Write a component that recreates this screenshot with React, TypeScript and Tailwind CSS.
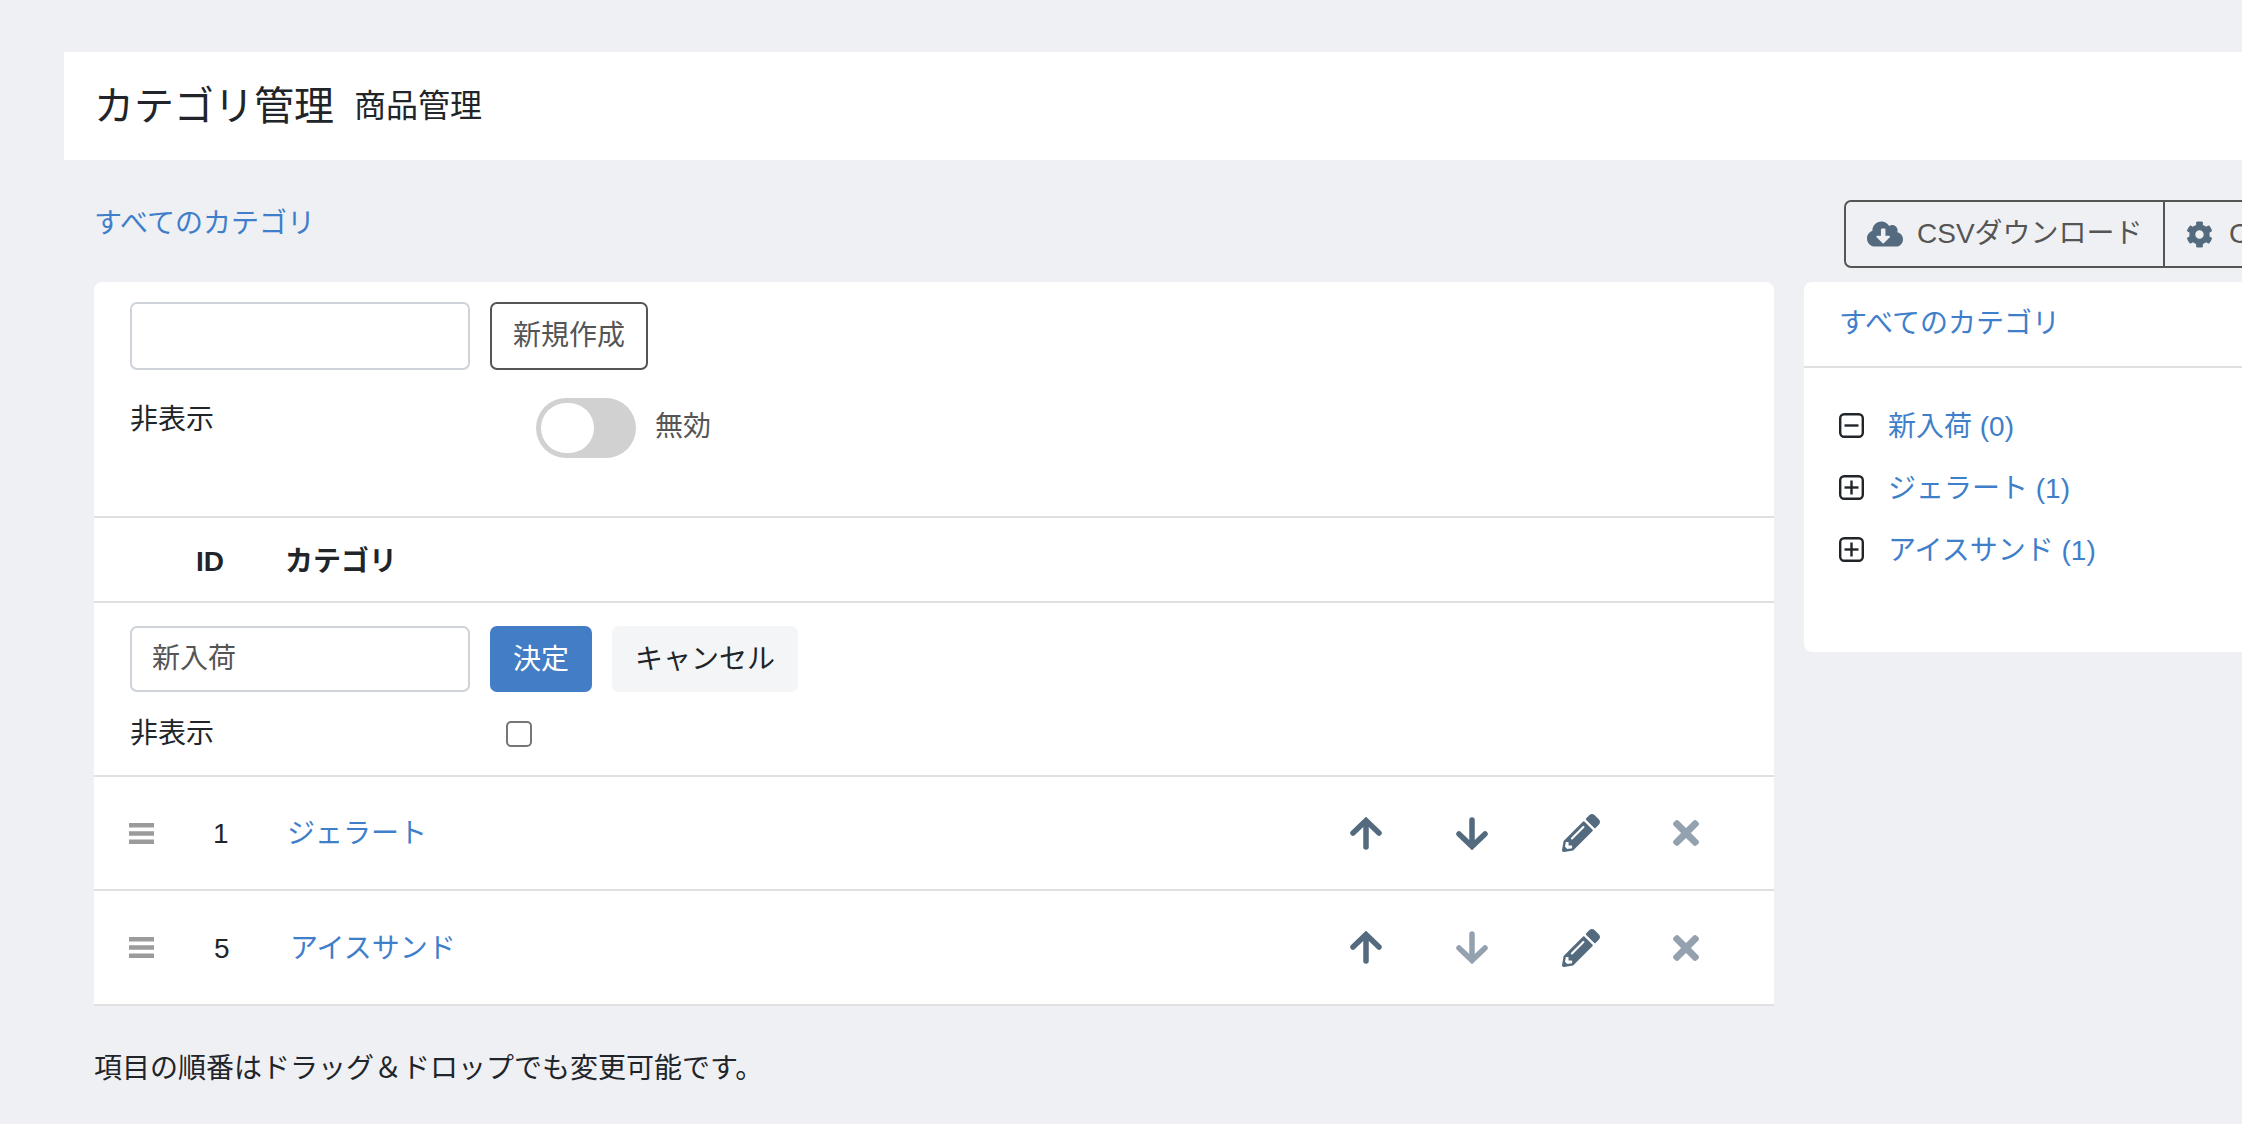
import { FaCloudDownloadAlt, FaCog, FaPencilAlt, FaTimes } from "react-icons/fa";

const FONT = "font-['Helvetica_Neue','Liberation_Sans','Noto_Sans_CJK_JP',sans-serif]";

const sideItems = [
  { label: "新入荷 (0)", open: true },
  { label: "ジェラート (1)", open: false },
  { label: "アイスサンド (1)", open: false },
];

const rows = [
  { id: "1", name: "ジェラート", idClass: "ml-[59px] w-[74px]", downMuted: false },
  { id: "5", name: "アイスサンド", idClass: "ml-[60px] w-[76px]", downMuted: true },
];

function Arrow({ up, muted }: { up?: boolean; muted?: boolean }) {
  return (
    <svg
      viewBox="0 0 32 33"
      className={`h-[33px] w-[32px] ${muted ? "text-[#94a1ae]" : "text-[#546a7e]"}`}
      fill="none"
      stroke="currentColor"
      strokeWidth="5.5"
      strokeLinecap="round"
      strokeLinejoin="miter"
    >
      {up ? (
        <path d="M16 30V5M3 16L16 3.5L29 16" />
      ) : (
        <path d="M16 3V28M3 17L16 29.5L29 17" />
      )}
    </svg>
  );
}

function DragHandle() {
  return (
    <svg viewBox="0 0 25 21" className="h-[21px] w-[25px] shrink-0" fill="#9b9b9b">
      <rect x="0" y="0" width="25" height="4.5" />
      <rect x="0" y="8.25" width="25" height="4.5" />
      <rect x="0" y="16.5" width="25" height="4.5" />
    </svg>
  );
}

function TreeToggle({ open }: { open: boolean }) {
  return (
    <svg viewBox="0 0 25 25" className="h-[25px] w-[25px] shrink-0" fill="none" stroke="#212529" strokeWidth="2.4">
      <rect x="1.2" y="1.2" width="22.6" height="22.6" rx="4" />
      <path d="M5.5 12.5H19.5" />
      {!open && <path d="M12.5 5.5V19.5" />}
    </svg>
  );
}

export default function App() {
  return (
    <div className={`h-screen w-full overflow-hidden bg-[#eff0f4] pl-[64px] pt-[52px] text-[28px] text-[#212529] ${FONT}`}>
      {/* Title bar */}
      <div className="flex h-[108px] items-center bg-white pl-[30px]">
        <h1 className="text-[40px] font-normal leading-none">カテゴリ管理</h1>
        <span className="ml-[20px] text-[32px] leading-none">商品管理</span>
      </div>

      <div className="flex w-[2400px] pl-[30px]">
        {/* Main column */}
        <div className="w-[1680px] shrink-0">
          <div className="flex h-[122px] items-start pt-[44px]">
            <a className="leading-[40px] text-[#3f7fca]">すべてのカテゴリ</a>
          </div>

          <div className="rounded-t-[8px] border-b-2 border-[#e0e0e0] bg-white">
            {/* New category form */}
            <div className="h-[236px] border-b-2 border-[#e0e0e0] pl-[36px] pt-[20px]">
              <div className="flex gap-[20px]">
                <input className="h-[68px] w-[340px] rounded-[7px] border-2 border-[#ced3da] bg-white" />
                <button className="h-[68px] w-[158px] rounded-[7px] border-2 border-[#555555] text-[28px] text-[#555555]">
                  新規作成
                </button>
              </div>
              <div className="mt-[28px] flex items-start">
                <span className="w-[406px] pt-[2px] leading-[40px]">非表示</span>
                <div className="flex h-[60px] w-[100px] items-center rounded-full bg-[#d1d1d1] pl-[5px]">
                  <div className="h-[50px] w-[53px] rounded-full bg-white" />
                </div>
                <span className="ml-[19px] pt-[9px] leading-[40px] text-[#555555]">無効</span>
              </div>
            </div>

            {/* Table head */}
            <div className="flex h-[85px] items-center border-b-2 border-[#e0e0e0] pt-[5px] font-bold">
              <span className="ml-[102px] w-[89px]">ID</span>
              <span>カテゴリ</span>
            </div>

            {/* Inline edit */}
            <div className="h-[174px] border-b-2 border-[#e0e0e0] pl-[36px] pt-[23px]">
              <div className="flex gap-[20px]">
                <input
                  defaultValue="新入荷"
                  className="h-[66px] w-[340px] rounded-[7px] border-2 border-[#ced3da] bg-white pb-[6px] pl-[20px] text-[28px] text-[#555555]"
                />
                <button className="h-[66px] w-[102px] rounded-[7px] bg-[#437dc5] pt-[2px] text-[28px] text-white">決定</button>
                <button className="h-[66px] w-[186px] rounded-[7px] bg-[#f4f5f7] pt-[2px] text-[28px]">キャンセル</button>
              </div>
              <div className="mt-[22px] flex items-center">
                <span className="w-[376px] leading-[40px]">非表示</span>
                <div className="h-[26px] w-[26px] rounded-[5px] border-2 border-[#767676] bg-white" />
              </div>
            </div>

            {/* Rows */}
            {rows.map((row, i) => (
              <div
                key={row.id}
                className={`flex items-center pl-[35px] ${i === 0 ? "h-[114px] border-b-2 border-[#e0e0e0]" : "h-[113px]"}`}
              >
                <DragHandle />
                <span className={`pt-[2px] ${row.idClass}`}>{row.id}</span>
                <a className="pt-[2px] text-[#3f7fca]">{row.name}</a>
                <div className="ml-auto flex items-center pr-[75px]">
                  <Arrow up />
                  <div className="ml-[74px]">
                    <Arrow muted={row.downMuted} />
                  </div>
                  <FaPencilAlt className="ml-[74px] h-[38px] w-[38px] text-[#546a7e]" />
                  <FaTimes className="ml-[73px] h-[38px] w-[26px] text-[#94a1ae]" />
                </div>
              </div>
            ))}
          </div>

          <p className="mt-[43px] leading-[40px]">項目の順番はドラッグ＆ドロップでも変更可能です。</p>
        </div>

        {/* Side column */}
        <div className="ml-[30px] w-[640px] shrink-0">
          <div className="flex h-[122px] items-start pl-[40px] pt-[40px]">
            <div className="flex h-[68px] w-max rounded-[7px] border-2 border-[#555555] text-[#555555]">
              <button className="flex w-[317px] shrink-0 items-center whitespace-nowrap pl-[21px] text-[28px]">
                <FaCloudDownloadAlt className="h-[36px] w-[36px] shrink-0 text-[#546a7e]" />
                <span className="ml-[14px]">CSVダウンロード</span>
              </button>
              <button className="flex w-[300px] shrink-0 items-center whitespace-nowrap border-l-2 border-[#555555] pl-[21px] text-[28px]">
                <FaCog className="h-[27px] w-[27px] shrink-0 text-[#546a7e]" />
                <span className="ml-[16px]">CSVアップロード</span>
              </button>
            </div>
          </div>

          <div className="h-[370px] rounded-[8px] bg-white">
            <div className="flex h-[86px] items-center border-b-2 border-[#e0e0e0] pl-[35px]">
              <a className="text-[#3f7fca]">すべてのカテゴリ</a>
            </div>
            <ul className="flex flex-col gap-[22px] pl-[35px] pt-[37px]">
              {sideItems.map((item) => (
                <li key={item.label} className="flex h-[40px] items-center">
                  <TreeToggle open={item.open} />
                  <a className="ml-[24px] pt-[4px] text-[#3f7fca]">{item.label}</a>
                </li>
              ))}
            </ul>
          </div>
        </div>
      </div>
    </div>
  );
}
